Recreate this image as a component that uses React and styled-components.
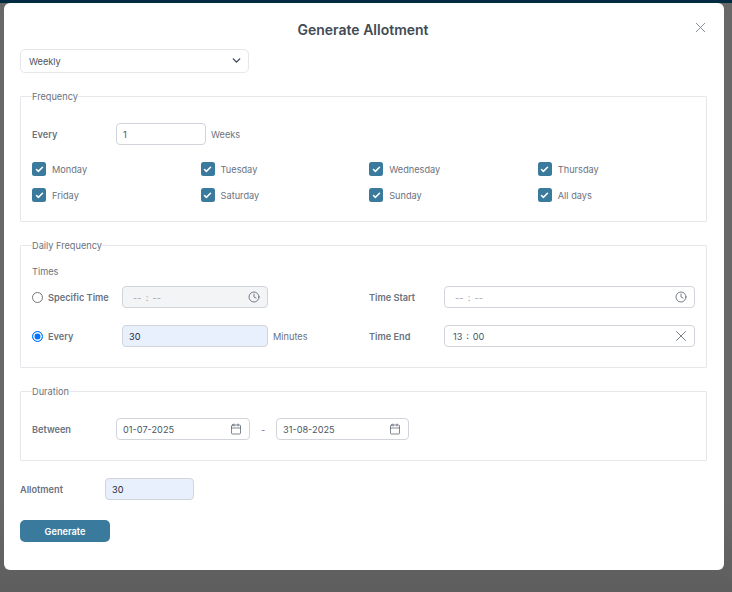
import React from 'react'
import styled, { createGlobalStyle } from 'styled-components'
import { ChevronDown, X, Clock, Calendar, Check } from 'lucide-react'

const GlobalStyle = createGlobalStyle`
  html, body {
    margin: 0;
    padding: 0;
    height: 592px;
    overflow: hidden;
    font-family: Inter, "Liberation Sans", sans-serif;
  }
  * {
    box-sizing: border-box;
  }
`

const WEEK_DAYS = ['Monday', 'Tuesday', 'Wednesday', 'Thursday', 'Friday', 'Saturday', 'Sunday', 'All days']

const App = () => {
  return (
    <Backdrop>
      <GlobalStyle />
      <TopStrip />
      <Modal>
        <Title>Generate Allotment</Title>
        <CloseButton>
          <X size={17} strokeWidth={1.1} />
        </CloseButton>

        <Select>
          Weekly
          <SelectArrow>
            <ChevronDown size={13} strokeWidth={2.4} color="#374151" />
          </SelectArrow>
        </Select>

        <Group $height={133}>
          <Legend>Frequency</Legend>
          <Row $top={20}>
            <BoldLabel $width={84}>Every</BoldLabel>
            <Field $width={90}>1</Field>
            <Unit>Weeks</Unit>
          </Row>
          <Days>
            {WEEK_DAYS.map((day) => (
              <Day key={day}>
                <Box>
                  <Check size={9} strokeWidth={4} color="#fff" />
                </Box>
                {day}
              </Day>
            ))}
          </Days>
        </Group>

        <Group $height={130}>
          <Legend>Daily Frequency</Legend>
          <TimesLabel>Times</TimesLabel>
          <TimeGrid>
            <TimeCell>
              <Radio />
              <BoldLabel $width={74}>Specific Time</BoldLabel>
              <Field $width={146} $disabled>
                <Blank>-- : --</Blank>
                <Clock size={12} strokeWidth={1.5} color="#4b5563" />
              </Field>
            </TimeCell>
            <TimeCell>
              <BoldLabel $width={75}>Time Start</BoldLabel>
              <Field $width={251}>
                <Blank>-- : --</Blank>
                <Clock size={12} strokeWidth={1.5} color="#4b5563" />
              </Field>
            </TimeCell>
            <TimeCell>
              <Radio $checked />
              <BoldLabel $width={74}>Every</BoldLabel>
              <Field $width={146} $filled>30</Field>
              <Unit>Minutes</Unit>
            </TimeCell>
            <TimeCell>
              <BoldLabel $width={75}>Time End</BoldLabel>
              <TimeValue>
                13 : 00
                <X size={18} strokeWidth={1} color="#4b5563" />
              </TimeValue>
            </TimeCell>
          </TimeGrid>
        </Group>

        <Group $height={77}>
          <Legend>Duration</Legend>
          <Row $top={20}>
            <BoldLabel $width={84}>Between</BoldLabel>
            <Field $width={134}>
              01-07-2025
              <Calendar size={12} strokeWidth={1.4} color="#4b5563" />
            </Field>
            <Dash>-</Dash>
            <Field $width={133}>
              31-08-2025
              <Calendar size={12} strokeWidth={1.4} color="#4b5563" />
            </Field>
          </Row>
        </Group>

        <AllotmentRow>
          <BoldLabel $width={85}>Allotment</BoldLabel>
          <Field $width={89} $filled>30</Field>
        </AllotmentRow>

        <GenerateButton>Generate</GenerateButton>
      </Modal>
    </Backdrop>
  )
}

// styled components
const Backdrop = styled.div`
  height: 592px;
  background: linear-gradient(#686868 85%, #5e5e5e);
`
const TopStrip = styled.div`
  height: 3px;
  background: #012b40;
`
const Modal = styled.div`
  position: relative;
  width: 720px;
  height: 567px;
  margin-left: 4px;
  padding: 46px 17px 0 16px;
  background: #fff;
  border-radius: 6px;
`
const Title = styled.h2`
  position: absolute;
  top: 18px;
  left: 0;
  right: 2px;
  margin: 0;
  text-align: center;
  font-size: 14px;
  line-height: 17px;
  font-weight: 600;
  color: #414b55;
`
const CloseButton = styled.div`
  position: absolute;
  top: 16px;
  right: 15px;
  display: flex;
  color: #6b7280;
`
const Select = styled.div`
  display: flex;
  align-items: center;
  justify-content: space-between;
  width: 229px;
  height: 24px;
  padding: 0 5px 0 8px;
  border: 1px solid #e5e7eb;
  border-radius: 5px;
  font-size: 9.2px;
  color: #4b5563;
`
const SelectArrow = styled.span`
  display: flex;
  margin-bottom: 2px;
`
const Group = styled.fieldset`
  display: block;
  width: 687px;
  height: ${(p) => p.$height}px;
  margin: 16px 0 0;
  padding: 0 0 0 11px;
  border: 1px solid #e5e7eb;
  border-radius: 1px;
  min-width: 0;
`
const Legend = styled.legend`
  padding: 2px 0 0;
  font-size: 9.2px;
  line-height: 12px;
  color: #6b7280;
`
const Row = styled.div`
  display: flex;
  align-items: center;
  margin-top: ${(p) => p.$top}px;
`
const BoldLabel = styled.span`
  flex: none;
  width: ${(p) => p.$width}px;
  font-size: 9.2px;
  font-weight: 600;
  color: #6b7280;
`
const Field = styled.div`
  display: flex;
  flex: none;
  align-items: center;
  justify-content: space-between;
  width: ${(p) => p.$width}px;
  height: 22px;
  padding: 0 7px 0 6px;
  border: 1px solid #d1d5db;
  border-radius: 4px;
  font-size: 9.2px;
  color: ${(p) => (p.$filled ? '#1f2937' : '#4b5563')};
  background: ${(p) => (p.$disabled ? '#f3f4f6' : p.$filled ? '#e8f0fe' : '#fff')};
`
const TimeValue = styled(Field).attrs({ $width: 251 })`
  padding: 0 4px 0 8px;
  word-spacing: 1.2px;
`
const Blank = styled.span`
  padding-left: 4px;
  word-spacing: 1.6px;
  color: #9ca3af;
`
const Unit = styled.span`
  margin-left: 5px;
  font-size: 9.2px;
  color: #6b7280;
`
const Days = styled.div`
  display: grid;
  grid-template-columns: repeat(4, 168.6px);
  row-gap: 12px;
  margin-top: 17px;
`
const Day = styled.div`
  display: flex;
  align-items: center;
  gap: 6px;
  height: 14px;
  font-size: 9.2px;
  color: #6b7280;
`
const Box = styled.span`
  display: flex;
  align-items: center;
  justify-content: center;
  width: 14px;
  height: 14px;
  border-radius: 2.5px;
  background: #3a7a9c;
`
const TimesLabel = styled.div`
  margin-top: 14px;
  font-size: 9.2px;
  line-height: 12px;
  color: #6b7280;
`
const TimeGrid = styled.div`
  display: grid;
  grid-template-columns: 337px 326px;
  row-gap: 17px;
  margin-top: 8px;
`
const TimeCell = styled.div`
  display: flex;
  align-items: center;
`
const Radio = styled.span`
  flex: none;
  width: 11px;
  height: 11px;
  margin-right: 5px;
  border-radius: 50%;
  border: ${(p) => (p.$checked ? '1px solid #0075ff' : '1px solid #767676')};
  background: ${(p) => (p.$checked ? '#0075ff' : '#fff')};
  box-shadow: ${(p) => (p.$checked ? 'inset 0 0 0 1.5px #fff' : 'none')};
`
const Dash = styled.span`
  width: 26px;
  text-align: center;
  font-size: 9.2px;
  color: #6b7280;
`
const AllotmentRow = styled.div`
  display: flex;
  align-items: center;
  margin-top: 17px;
`
const GenerateButton = styled.button`
  display: block;
  width: 90px;
  height: 22px;
  margin-top: 20px;
  padding: 0;
  border: 0;
  border-radius: 5px;
  background: #3a7a9c;
  color: #fff;
  font-family: inherit;
  font-size: 9.2px;
  font-weight: 600;
`

export default App
